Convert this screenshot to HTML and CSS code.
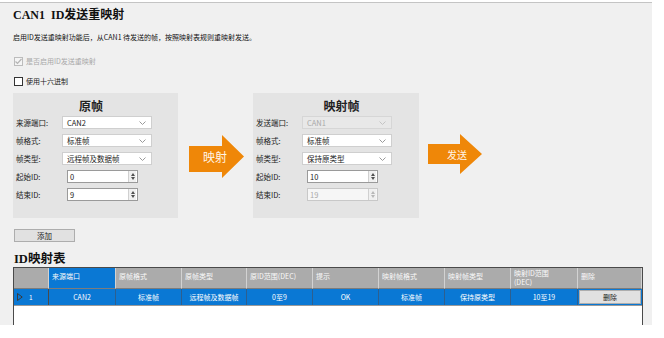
FILE: index.html
```html
<!doctype html>
<html lang="zh-CN">

<head>
    <meta charset="UTF-8">
    <title>CAN1 ID发送重映射</title>
    <link rel="stylesheet" href="styles.css">
</head>

<body>
    <div class="app">
        <h1 class="page--title">CAN1 ID发送重映射</h1>
        <p class="page--desc">启用ID发送重映射功能后，从CAN1 待发送的帧，按照映射表规则重映射发送。</p>

        <label class="check check--disabled">
            <span class="check__box">
                <svg width="9" height="9" viewBox="0 0 9 9"><polyline points="1.5,4.5 3.5,6.5 7.5,2" fill="none" stroke="#b4b4b4" stroke-width="1.2"/></svg>
            </span>
            是否启用ID发送重映射
        </label>
        <label class="check check--second">
            <span class="check__box"></span>
            使用十六进制
        </label>

        <div class="frames">
            <div class="panel panel--left">
                <div class="panel__title">原帧</div>
                <div class="panel__grid">
                    <span class="field__label">来源端口:</span>
                    <div class="select"><span>CAN2</span><svg width="7" height="4" viewBox="0 0 7 4"><polyline points="0.5,0.5 3.5,3.5 6.5,0.5" fill="none" stroke="#9a9a9a"/></svg></div>
                    <span class="field__label">帧格式:</span>
                    <div class="select"><span>标准帧</span><svg width="7" height="4" viewBox="0 0 7 4"><polyline points="0.5,0.5 3.5,3.5 6.5,0.5" fill="none" stroke="#9a9a9a"/></svg></div>
                    <span class="field__label">帧类型:</span>
                    <div class="select"><span>远程帧及数据帧</span><svg width="7" height="4" viewBox="0 0 7 4"><polyline points="0.5,0.5 3.5,3.5 6.5,0.5" fill="none" stroke="#9a9a9a"/></svg></div>
                    <span class="field__label">起始ID:</span>
                    <div class="spin"><span>0</span><div class="spin__btns"><i class="up"></i><i class="down"></i></div></div>
                    <span class="field__label">结束ID:</span>
                    <div class="spin"><span>9</span><div class="spin__btns"><i class="up"></i><i class="down"></i></div></div>
                </div>
            </div>

            <div class="arrow arrow--map">映射</div>

            <div class="panel panel--right">
                <div class="panel__title">映射帧</div>
                <div class="panel__grid">
                    <span class="field__label">发送端口:</span>
                    <div class="select select--disabled"><span>CAN1</span><svg width="7" height="4" viewBox="0 0 7 4"><polyline points="0.5,0.5 3.5,3.5 6.5,0.5" fill="none" stroke="#c4c4c4"/></svg></div>
                    <span class="field__label">帧格式:</span>
                    <div class="select"><span>标准帧</span><svg width="7" height="4" viewBox="0 0 7 4"><polyline points="0.5,0.5 3.5,3.5 6.5,0.5" fill="none" stroke="#9a9a9a"/></svg></div>
                    <span class="field__label">帧类型:</span>
                    <div class="select"><span>保持原类型</span><svg width="7" height="4" viewBox="0 0 7 4"><polyline points="0.5,0.5 3.5,3.5 6.5,0.5" fill="none" stroke="#9a9a9a"/></svg></div>
                    <span class="field__label">起始ID:</span>
                    <div class="spin"><span>10</span><div class="spin__btns"><i class="up"></i><i class="down"></i></div></div>
                    <span class="field__label">结束ID:</span>
                    <div class="spin spin--disabled"><span>19</span><div class="spin__btns"><i class="up"></i><i class="down"></i></div></div>
                </div>
            </div>

            <div class="arrow arrow--send">发送</div>
        </div>

        <button class="btn btn--add">添加</button>

        <h2 class="table--title">ID映射表</h2>
        <div class="grid">
            <div class="grid__row grid__head">
                <div class="cell cell--rowhead"></div>
                <div class="cell cell--selected">来源端口</div>
                <div class="cell">原帧格式</div>
                <div class="cell">原帧类型</div>
                <div class="cell">原ID范围(DEC)</div>
                <div class="cell">提示</div>
                <div class="cell">映射帧格式</div>
                <div class="cell">映射帧类型</div>
                <div class="cell cell--wrap">映射ID范围<br>(DEC)</div>
                <div class="cell">删除</div>
            </div>
            <div class="grid__row grid__data">
                <div class="cell cell--rowhead">
                    <svg width="6" height="8" viewBox="0 0 6 8"><polygon points="0.5,0.5 5.2,4 0.5,7.5" fill="none" stroke="#3a3a3a"/></svg>1
                </div>
                <div class="cell">CAN2</div>
                <div class="cell">标准帧</div>
                <div class="cell">远程帧及数据帧</div>
                <div class="cell">0至9</div>
                <div class="cell">OK</div>
                <div class="cell">标准帧</div>
                <div class="cell">保持原类型</div>
                <div class="cell">10至19</div>
                <div class="cell cell--btn"><span class="btn btn--del">删除</span></div>
            </div>
        </div>
    </div>
</body>

</html>
```

FILE: styles.css
```css
body {
    margin: 0;
    background: #ffffff;
    font-family: "Noto Sans CJK SC", sans-serif;
    color: #1e1e1e;
}

.app {
    box-sizing: border-box;
    width: 652px;
    height: 323px;
    margin-top: 2px;
    padding-left: 13px;
    border-top: 1px solid #c4c4c4;
    background: #f0f0f0;
    overflow: hidden;
}

.page--title {
    margin: 3px 0 0;
    font-family: "Liberation Serif", "Noto Sans CJK SC", serif;
    font-size: 12px;
    line-height: 18px;
    font-weight: bold;
    word-spacing: 3px;
    color: #111;
}

.page--desc {
    margin: 7px 0 0;
    font-size: 7px;
    line-height: 12px;
    color: #111;
}

.check {
    display: flex;
    align-items: center;
    gap: 3px;
    height: 12px;
    margin-top: 12px;
    font-size: 7px;
    color: #1a1a1a;
}

.check--second {
    margin-top: 8px;
}

.check--disabled {
    color: #a8a8a8;
}

.check__box {
    box-sizing: border-box;
    width: 9px;
    height: 9px;
    margin-left: 1px;
    border: 1px solid #333;
    background: #fff;
    display: flex;
}

.check--disabled .check__box {
    border-color: #bcbcbc;
    background: #f4f4f4;
}

.check--disabled .check__box svg {
    margin: -1px;
}

/* frames row */
.frames {
    display: flex;
    align-items: flex-start;
    margin-top: 6px;
    height: 125px;
}

.panel {
    box-sizing: border-box;
    width: 165px;
    height: 125px;
    padding: 4px 0 0 3px;
    background: #e4e4e4;
}

.panel--right {
    width: 166px;
    margin-left: 9px;
}

.panel__title {
    height: 18px;
    line-height: 18px;
    text-align: center;
    font-size: 12px;
    font-weight: bold;
    color: #222;
}

.panel--left .panel__title {
    padding-right: 12px;
}

.panel--right .panel__title {
    padding-left: 8px;
}

.panel__grid {
    display: grid;
    grid-template-columns: 46px 90px;
    grid-auto-rows: 13px;
    row-gap: 5px;
    margin-top: 1px;
}

.field__label {
    font-size: 7.5px;
    line-height: 13px;
    color: #1a1a1a;
}

.select {
    box-sizing: border-box;
    display: flex;
    align-items: center;
    justify-content: space-between;
    padding: 0 5px 0 4px;
    border: 1px solid #cfcfcf;
    background: #fff;
    font-size: 7.5px;
    color: #1a1a1a;
}

.select--disabled {
    background: #e8e8e8;
    border-color: #d6d6d6;
    color: #a8a8a8;
}

.spin {
    box-sizing: border-box;
    display: flex;
    align-items: center;
    justify-content: space-between;
    width: 71px;
    margin-left: 5px;
    padding-left: 2px;
    border: 1px solid #9a9a9a;
    background: #fff;
    font-size: 7.5px;
    color: #1a1a1a;
}

.spin--disabled {
    border-color: #c8c8c8;
    color: #a8a8a8;
    background: #f6f6f6;
}

.spin__btns {
    display: flex;
    flex-direction: column;
    justify-content: center;
    gap: 1px;
    width: 7px;
    height: 11px;
    margin-right: 1px;
    border-left: 1px solid #d0d0d0;
    background: #f0f0f0;
}

.spin__btns i {
    display: block;
    margin: 0 auto;
    width: 0;
    height: 0;
    border-left: 2px solid transparent;
    border-right: 2px solid transparent;
}

.spin__btns .up {
    border-bottom: 3px solid #505050;
}

.spin__btns .down {
    border-top: 3px solid #505050;
}

.spin--disabled .spin__btns .up {
    border-bottom-color: #b8b8b8;
}

.spin--disabled .spin__btns .down {
    border-top-color: #b8b8b8;
}

/* arrows */
.arrow {
    box-sizing: border-box;
    display: flex;
    align-items: center;
    background: #ef8708;
    color: #fff4e6;
    font-size: 12px;
}

.arrow--map {
    width: 55px;
    height: 43px;
    margin: 42px 0 0 11px;
    padding-left: 14px;
    clip-path: polygon(0 11px, 33px 11px, 33px 0, 55px 21.5px, 33px 43px, 33px 37px, 0 37px);
}

.arrow--send {
    width: 54px;
    height: 40px;
    margin: 41px 0 0 9px;
    padding-left: 19px;
    font-size: 10px;
    clip-path: polygon(0 10px, 32px 10px, 32px 0, 54px 20px, 32px 40px, 32px 30px, 0 30px);
}

/* buttons */
.btn {
    box-sizing: border-box;
    display: flex;
    align-items: center;
    justify-content: center;
    border: 1px solid #adadad;
    background: #e1e1e1;
    font-family: "Noto Sans CJK SC", sans-serif;
    font-size: 7.5px;
    color: #1a1a1a;
    padding: 0;
}

.btn--add {
    width: 61px;
    height: 13px;
    margin: 11px 0 0 1px;
}

.table--title {
    margin: 9px 0 0 1px;
    height: 16px;
    font-family: "Liberation Serif", "Noto Sans CJK SC", serif;
    font-size: 12.5px;
    line-height: 16px;
    font-weight: bold;
    color: #111;
}

/* mapping table */
.grid {
    box-sizing: border-box;
    width: 630px;
    height: 60px;
    border-top: 1px solid #4a4a4a;
    border-left: 1px solid #4a4a4a;
    border-right: 1px solid #4a4a4a;
    background: #fff;
}

.grid__row {
    display: grid;
    grid-template-columns: 35px 67px 66px 65px 66px 66px 66px 66px 67px 64px;
}

.grid__head {
    height: 21px;
    background: #ababab;
}

.grid__head .cell {
    box-sizing: border-box;
    padding: 4px 0 0 3px;
    border-right: 1px solid #d2d2d2;
    border-bottom: 1px solid #7c7c7c;
    font-size: 7px;
    line-height: 9px;
    color: #fafafa;
}

.grid__head .cell--wrap {
    padding-top: 1px;
}

.grid__head .cell--selected {
    background: #0a78d4;
}

.grid__data {
    height: 16px;
    background: #0a78d4;
    border-bottom: 1px solid #9a9a9a;
}

.grid__data .cell {
    box-sizing: border-box;
    display: flex;
    align-items: center;
    justify-content: center;
    border-right: 1px solid #2d5f8f;
    font-size: 7px;
    color: #fff;
}

.grid__data .cell--rowhead {
    justify-content: flex-start;
    gap: 6px;
    padding-left: 3px;
    border-right: 1px solid #4a4a4a;
    font-size: 6.5px;
}

.grid__data .cell--btn {
    padding: 1px;
    border-right: none;
}

.btn--del {
    width: 100%;
    height: 100%;
    font-size: 7px;
}
```
